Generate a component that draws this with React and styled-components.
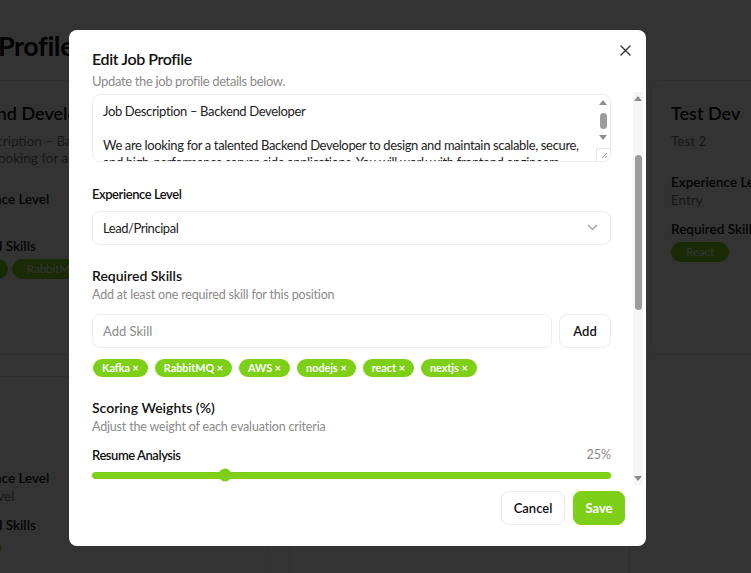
import React from "react";
import styled, { createGlobalStyle } from "styled-components";

const GREEN = "#7dcf17";
const FONT = `Lato, "Open Sans", "Liberation Sans", sans-serif`;

const Global = createGlobalStyle`
  html, body { margin: 0; padding: 0; overflow: hidden; background: #fff; }
  body { font-family: ${FONT}; color: #111; }
  * { box-sizing: border-box; }
`;

/* ---------- background page ---------- */
const Page = styled.div`
  width: 1100px;
  margin-left: -96px;
  padding: 0 24px;
`;
const PageHeader = styled.header`
  height: 80px;
  display: flex;
  align-items: center;
  padding-left: 23px;
  padding-top: 10px;
`;
const PageTitle = styled.h1`
  margin: 0;
  font-size: 27px;
  font-weight: 700;
  letter-spacing: -0.4px;
  color: #111;
`;
const CardGrid = styled.div`
  display: grid;
  grid-template-columns: repeat(3, 341px);
  grid-auto-rows: 275px;
  gap: 21px 20px;
`;
const Card = styled.div`
  border: 1px solid #e5e5e5;
  border-radius: 10px;
  padding: 20px;
  display: flex;
  flex-direction: column;
`;
const CardTitle = styled.div`
  font-size: 18px;
  font-weight: 600;
  line-height: 24px;
`;
const CardDesc = styled.div`
  margin-top: 8px;
  font-size: 13.5px;
  line-height: 17px;
  color: #777;
  white-space: pre;
`;
const CardLabel = styled.div`
  margin-top: ${(p) => p.$mt}px;
  font-size: 13.5px;
  font-weight: 600;
  line-height: 18px;
`;
const CardValue = styled.div`
  font-size: 13.5px;
  line-height: 18px;
  color: #777;
`;
const CardChips = styled.div`
  margin-top: 4px;
  display: flex;
  gap: 4px;
`;
const CardChip = styled.span`
  height: 20px;
  padding: 0 15px;
  border-radius: 10px;
  background: ${GREEN};
  color: #fff;
  font-size: 11.5px;
  line-height: 20px;
`;

const Overlay = styled.div`
  position: fixed;
  inset: 0;
  background: rgba(0, 0, 0, 0.8);
  display: flex;
  align-items: center;
  justify-content: center;
  padding-right: 36px;
  padding-top: 2px;
`;

/* ---------- modal ---------- */
const Modal = styled.div`
  position: relative;
  width: 577px;
  height: 516px;
  background: #fff;
  border-radius: 8px;
  padding: 17px 21px 21px 23px;
  display: flex;
  flex-direction: column;
`;
const CloseBtn = styled.button`
  position: absolute;
  top: 13px;
  right: 13px;
  width: 16px;
  height: 16px;
  padding: 0;
  border: none;
  background: none;
  display: flex;
  align-items: center;
  justify-content: center;
  color: #333;
`;
const Title = styled.h2`
  margin: 0;
  font-size: 16px;
  font-weight: 600;
  letter-spacing: -0.4px;
  line-height: 24px;
  color: #111;
`;
const Subtitle = styled.p`
  margin: 1px 0 0;
  font-size: 13px;
  letter-spacing: -0.35px;
  line-height: 18px;
  color: #8a8a8a;
`;
const ScrollArea = styled.div`
  margin-top: 2px;
  margin-right: -18px;
  height: 394px;
  display: flex;
`;
const ScrollContent = styled.div`
  flex: 1;
  overflow: hidden;
  padding: 2px 22px 0 0;
  display: flex;
  flex-direction: column;
`;
const Track = styled.div`
  width: 10px;
  background: #f6f6f6;
  display: flex;
  flex-direction: column;
  align-items: center;
  padding: 4px 0;
`;
const Arrow = styled.div`
  width: 0;
  height: 0;
  margin-top: ${(p) => p.$mt || 0}px;
  border-left: ${(p) => p.$w}px solid transparent;
  border-right: ${(p) => p.$w}px solid transparent;
  ${(p) =>
    p.$dir === "up"
      ? `border-bottom: ${p.$h}px solid #8d8d8d;`
      : `border-top: ${p.$h}px solid #8d8d8d;`}
`;
const Thumb = styled.div`
  width: ${(p) => p.$w}px;
  height: ${(p) => p.$h}px;
  margin-top: ${(p) => p.$mt}px;
  border-radius: 4px;
  background: #9c9c9c;
`;
const Spacer = styled.div`
  flex: 1;
`;

const TextBox = styled.div`
  height: 68px;
  border: 1px solid #ececec;
  border-radius: 8px;
  display: flex;
  overflow: hidden;
`;
const Area = styled.textarea`
  flex: 1;
  border: none;
  outline: none;
  resize: none;
  overflow: hidden;
  white-space: pre;
  padding: 8px 10px;
  margin: 0;
  font-family: ${FONT};
  font-size: 13px;
  letter-spacing: -0.35px;
  line-height: 17px;
  color: #222;
  background: transparent;
`;
const AreaBar = styled.div`
  width: 14px;
  display: flex;
  flex-direction: column;
  align-items: center;
  padding-top: 5px;
`;
const Resizer = styled.div`
  width: 14px;
  height: 13px;
  border-top: 1px solid #e6e6e6;
  border-left: 1px solid #e6e6e6;
  display: flex;
  align-items: center;
  justify-content: center;
`;

const Label = styled.div`
  margin-top: ${(p) => p.$mt || 0}px;
  font-size: ${(p) => (p.$big ? 14 : 13)}px;
  letter-spacing: ${(p) => (p.$big ? 0 : -0.45)}px;
  font-weight: 600;
  line-height: ${(p) => (p.$big ? 20 : 18)}px;
  color: #111;
`;
const Hint = styled.div`
  font-size: 12.5px;
  letter-spacing: -0.17px;
  line-height: 18px;
  color: #8a8a8a;
`;
const Field = styled.div`
  margin-top: ${(p) => p.$mt || 0}px;
  height: 34px;
  border: 1px solid #ececec;
  border-radius: 8px;
  display: flex;
  align-items: center;
  padding: 0 12px 0 10px;
  font-size: 13px;
  letter-spacing: ${(p) => (p.$placeholder ? 0 : -0.45)}px;
  color: ${(p) => (p.$placeholder ? "#8a8a8a" : "#222")};
  flex: ${(p) => (p.$grow ? 1 : "none")};
  justify-content: space-between;
`;
const Row = styled.div`
  margin-top: 10px;
  display: flex;
  gap: 7px;
`;
const OutlineBtn = styled.button`
  height: 34px;
  width: ${(p) => p.$w}px;
  border: 1px solid #ececec;
  border-radius: 8px;
  background: #fff;
  font-family: ${FONT};
  font-size: 13px;
  font-weight: 600;
  color: #111;
  padding: 0;
`;
const SolidBtn = styled(OutlineBtn)`
  border-color: ${GREEN};
  background: ${GREEN};
  color: #fff;
  font-weight: 700;
`;
const Chips = styled.div`
  margin-top: 11px;
  display: flex;
  gap: 7px;
  padding-left: 1px;
`;
const Chip = styled.span`
  height: 18px;
  padding: 0 9px;
  border-radius: 9px;
  background: ${GREEN};
  color: #fff;
  font-size: 10.8px;
  font-weight: 700;
  line-height: 18px;
  white-space: nowrap;
`;
const SliderHead = styled.div`
  margin-top: 10px;
  display: flex;
  justify-content: space-between;
  align-items: center;
`;
const Pct = styled.span`
  font-size: 12.5px;
  color: #8a8a8a;
  line-height: 18px;
`;
const SliderTrack = styled.div`
  position: relative;
  margin-top: 8px;
  height: 7px;
  border-radius: 4px;
  background: ${GREEN};
  flex: none;
`;
const SliderThumb = styled.div`
  position: absolute;
  top: 50%;
  width: 13px;
  height: 13px;
  border-radius: 50%;
  background: ${GREEN};
  transform: translate(-50%, -50%);
`;
const Footer = styled.div`
  margin-top: 6px;
  display: flex;
  justify-content: flex-end;
  gap: 8px;
`;

const description =
  "Job Description – Backend Developer\n\nWe are looking for a talented Backend Developer to design and maintain scalable, secure,\nand high-performance server-side applications. You will work with frontend engineers\nto build robust APIs and services.";

const skills = ["Kafka", "RabbitMQ", "AWS", "nodejs", "react", "nextjs"];

function BgCard({ title, desc, level, skillsList }) {
  return (
    <Card>
      <CardTitle>{title}</CardTitle>
      <CardDesc>{desc}</CardDesc>
      <CardLabel $mt={23}>Experience Level</CardLabel>
      <CardValue>{level}</CardValue>
      <CardLabel $mt={11}>Required Skills</CardLabel>
      <CardChips>
        {skillsList.map((s) => (
          <CardChip key={s}>{s}</CardChip>
        ))}
      </CardChips>
    </Card>
  );
}

export default function App() {
  return (
    <>
      <Global />
      <Page>
        <PageHeader>
          <PageTitle>Job Profiles</PageTitle>
        </PageHeader>
        <CardGrid>
          <BgCard
            title="Backend Developer"
            desc={"Job Description – Backend Developer\nWe are looking for a talented Backend"}
            level="Senior"
            skillsList={["Kafka", "RabbitMQ", "AWS"]}
          />
          <BgCard title="Frontend Developer" desc="Build UIs" level="Mid" skillsList={["react"]} />
          <BgCard title="Test Dev" desc="Test 2" level="Entry" skillsList={["React"]} />
          <BgCard title="Test" desc="N/A" level="Entry Level" skillsList={["Java"]} />
          <BgCard title="Designer" desc="UI" level="Mid" skillsList={[]} />
        </CardGrid>
      </Page>

      <Overlay>
        <Modal>
          <CloseBtn aria-label="Close">
            <svg width="11" height="11" viewBox="0 0 11 11" fill="none" stroke="#333" strokeWidth="1.4" strokeLinecap="round">
              <path d="M1 1L10 10M10 1L1 10" />
            </svg>
          </CloseBtn>
          <Title>Edit Job Profile</Title>
          <Subtitle>Update the job profile details below.</Subtitle>

          <ScrollArea>
            <ScrollContent>
              <TextBox>
                <Area readOnly value={description} />
                <AreaBar>
                  <Arrow $dir="up" $w={4} $h={5} />
                  <Thumb $w={7} $h={16} $mt={8} />
                  <Arrow $dir="down" $w={4} $h={5} $mt={6} />
                  <Spacer />
                  <Resizer>
                    <svg width="8" height="8" viewBox="0 0 8 8" stroke="#999" strokeWidth="1">
                      <path d="M7 2L2 7M7 5L5 7" />
                    </svg>
                  </Resizer>
                </AreaBar>
              </TextBox>

              <Label $mt={23}>Experience Level</Label>
              <Field $mt={8}>
                <span>Lead/Principal</span>
                <svg width="11" height="7" viewBox="0 0 11 7" fill="none" stroke="#9a9a9a" strokeWidth="1.2">
                  <path d="M1 1l4.5 4.5L10 1" />
                </svg>
              </Field>

              <Label $big $mt={21}>Required Skills</Label>
              <Hint>Add at least one required skill for this position</Hint>
              <Row>
                <Field $grow $placeholder>Add Skill</Field>
                <OutlineBtn $w={52}>Add</OutlineBtn>
              </Row>
              <Chips>
                {skills.map((s) => (
                  <Chip key={s}>{s} ×</Chip>
                ))}
              </Chips>

              <Label $big $mt={21}>Scoring Weights (%)</Label>
              <Hint>Adjust the weight of each evaluation criteria</Hint>
              <SliderHead>
                <Label>Resume Analysis</Label>
                <Pct>25%</Pct>
              </SliderHead>
              <SliderTrack>
                <SliderThumb style={{ left: "25.6%" }} />
              </SliderTrack>
            </ScrollContent>
            <Track>
              <Arrow $dir="up" $w={4} $h={5} />
              <Thumb $w={7} $h={155} $mt={54} />
              <Spacer />
              <Arrow $dir="down" $w={4} $h={5} />
            </Track>
          </ScrollArea>

          <Footer>
            <OutlineBtn $w={64}>Cancel</OutlineBtn>
            <SolidBtn $w={52}>Save</SolidBtn>
          </Footer>
        </Modal>
      </Overlay>
    </>
  );
}
